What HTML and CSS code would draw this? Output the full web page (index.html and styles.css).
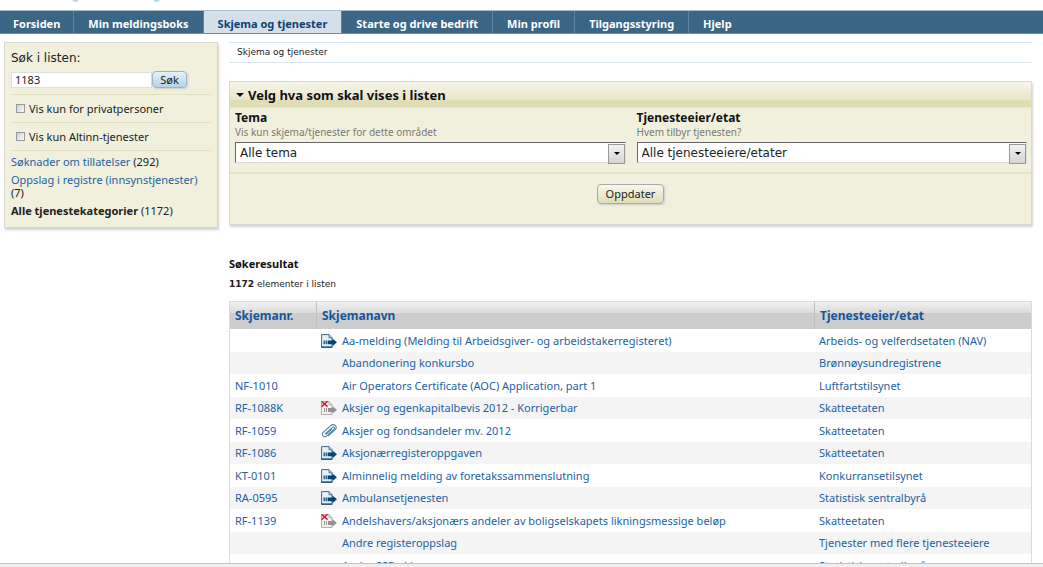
FILE: index.html
```html
<!DOCTYPE html>
<html lang="no">
<head>
<meta charset="utf-8">
<title>Skjema og tjenester</title>
<link rel="stylesheet" href="styles.css">
</head>
<body>
<svg class="sprite" aria-hidden="true">
  <symbol id="send" viewBox="0 0 16 14">
    <path d="M.6 .6H8L11 3.6V13.4H.6Z" fill="#e3f1f8" stroke="#34698c"/>
    <path d="M8 .6V3.8H11" fill="#9fc6da" stroke="#34698c" stroke-width=".8"/>
    <path d="M2.600 6.400h1.200v3.800h-1.200zM4.600 6.400h1.200v3.800h-1.200zM6.600 6.400H11.400V4.400L16 8.300L11.400 12.200V10.200H6.600z" fill="#064770"/>
    <path d="M.2 13H11.4" stroke="#174f75" stroke-width="1.2"/>
  </symbol>
  <symbol id="closed" viewBox="0 0 16 14">
    <path d="M.6 .6H8L11 3.6V13.4H.6Z" fill="#f6f4f3" stroke="#aaa7a8"/>
    <path d="M8 .6V3.8H11" fill="#ddd" stroke="#aaa7a8" stroke-width=".8"/>
    <path d="M3 7h1v4H3zM5 7h1v4H5zM7 7H11.4V5L16 8.9L11.4 12.600V11H7z" fill="#929194"/>
    <path d="M.5 .4L6.6 5.6M6.6 .2L.5 5.8" stroke="#d3173b" stroke-width="1.5"/>
  </symbol>
  <symbol id="clip" viewBox="0 0 16 14">
    <path d="M4.2 9.9L11.3 3.6C12.9 2.2 14.5 3.8 12.9 5.3L5.7 11.8C3.2 14 -.4 10.9 2.2 8.3L9.4 1.8C10.8.6 12.6.3 14 1.2C15.8 2.4 15.5 4.4 14.1 5.8L7.6 11.7M5.4 9.9L10.7 5.1" fill="none" stroke="#4d86a5" stroke-width="1.1" stroke-linecap="round"/>
  </symbol>
</svg>
<div class="page">
  <svg class="logo-edge" width="240" height="3" viewBox="0 0 240 3" aria-hidden="true"><path d="M73 0Q75.500 2 78 0M154 0Q156.500 2 159 0" fill="none" stroke="#a9cfe8" stroke-width="1.500"/></svg>
  <nav class="nav">
    <a href="#">Forsiden</a>
    <a href="#">Min meldingsboks</a>
    <a href="#" class="active">Skjema og tjenester</a>
    <a href="#">Starte og drive bedrift</a>
    <a href="#">Min profil</a>
    <a href="#">Tilgangsstyring</a>
    <a href="#">Hjelp</a>
  </nav>
  <div class="columns">
    <aside class="side box">
      <label class="side-title" for="q">Søk i listen:</label>
      <div class="search"><input type="text" id="q" value="1183"><button class="btn blue" type="button">Søk</button></div>
      <div class="check"><input type="checkbox" id="priv"><label for="priv">Vis kun for privatpersoner</label></div>
      <div class="check"><input type="checkbox" id="alt"><label for="alt">Vis kun Altinn-tjenester</label></div>
      <ul class="cats">
        <li><a href="#">Søknader om tillatelser</a> (292)</li>
        <li><a href="#">Oppslag i registre (innsynstjenester)</a> (7)</li>
        <li><b>Alle tjenestekategorier</b> (1172)</li>
      </ul>
    </aside>
    <main class="main">
      <div class="crumbs">Skjema og tjenester</div>
      <section class="filter box">
        <h2><span class="tri"></span>Velg hva som skal vises i listen</h2>
        <div class="fields">
          <div class="field">
            <label for="tema">Tema</label>
            <p>Vis kun skjema/tjenester for dette området</p>
            <div class="select"><select id="tema"><option>Alle tema</option></select></div>
          </div>
          <div class="field">
            <label for="etat">Tjenesteeier/etat</label>
            <p>Hvem tilbyr tjenesten?</p>
            <div class="select"><select id="etat"><option>Alle tjenesteeiere/etater</option></select></div>
          </div>
        </div>
        <div class="actions"><button class="btn" type="button">Oppdater</button></div>
      </section>
      <h3>Søkeresultat</h3>
      <p class="count"><b>1172</b> elementer i listen</p>
      <table>
        <colgroup><col class="c1"><col class="c2"><col class="c3"><col class="c4"></colgroup>
        <thead><tr><th><a href="#">Skjemanr.</a></th><th colspan="2"><a href="#">Skjemanavn</a></th><th><a href="#">Tjenesteeier/etat</a></th></tr></thead>
        <tbody>
          <tr><td></td><td><svg><use href="#send"/></svg></td><td><a href="#">Aa-melding (Melding til Arbeidsgiver- og arbeidstakerregisteret)</a></td><td><a href="#">Arbeids- og velferdsetaten (NAV)</a></td></tr>
          <tr><td></td><td></td><td><a href="#">Abandonering konkursbo</a></td><td><a href="#">Brønnøysundregistrene</a></td></tr>
          <tr><td><a href="#">NF-1010</a></td><td></td><td><a href="#">Air Operators Certificate (AOC) Application, part 1</a></td><td><a href="#">Luftfartstilsynet</a></td></tr>
          <tr><td><a href="#">RF-1088K</a></td><td><svg><use href="#closed"/></svg></td><td><a href="#">Aksjer og egenkapitalbevis 2012 - Korrigerbar</a></td><td><a href="#">Skatteetaten</a></td></tr>
          <tr><td><a href="#">RF-1059</a></td><td><svg><use href="#clip"/></svg></td><td><a href="#">Aksjer og fondsandeler mv. 2012</a></td><td><a href="#">Skatteetaten</a></td></tr>
          <tr><td><a href="#">RF-1086</a></td><td><svg><use href="#send"/></svg></td><td><a href="#">Aksjonærregisteroppgaven</a></td><td><a href="#">Skatteetaten</a></td></tr>
          <tr><td><a href="#">KT-0101</a></td><td><svg><use href="#send"/></svg></td><td><a href="#">Alminnelig melding av foretakssammenslutning</a></td><td><a href="#">Konkurransetilsynet</a></td></tr>
          <tr><td><a href="#">RA-0595</a></td><td><svg><use href="#send"/></svg></td><td><a href="#">Ambulansetjenesten</a></td><td><a href="#">Statistisk sentralbyrå</a></td></tr>
          <tr><td><a href="#">RF-1139</a></td><td><svg><use href="#closed"/></svg></td><td><a href="#">Andelshavers/aksjonærs andeler av boligselskapets likningsmessige beløp</a></td><td><a href="#">Skatteetaten</a></td></tr>
          <tr><td></td><td></td><td><a href="#">Andre registeroppslag</a></td><td><a href="#">Tjenester med flere tjenesteeiere</a></td></tr>
          <tr><td></td><td></td><td><a href="#">Andre SSB-skjema</a></td><td><a href="#">Statistisk sentralbyrå</a></td></tr>
        </tbody>
      </table>
    </main>
  </div>
</div>
<div class="statusbar"></div>
</body>
</html>
```
FILE: styles.css
```css
* { box-sizing: border-box; }
body {
  margin: 0;
  height: 100vh;
  display: flex;
  flex-direction: column;
  background: #fff;
  color: #222;
  font: 11px/14px "Noto Sans", sans-serif;
}
a { color: #2362a3; text-decoration: none; }
h2, h3, p, ul { margin: 0; padding: 0; }
.sprite { display: none; }
.page { flex: 1; min-height: 0; overflow: hidden; }
.statusbar { height: 4px; background: #f1eeef; border-top: 1px solid #c4c4c4; }
.logo-edge { display: block; margin-bottom: 7px; }

.nav {
  display: flex;
  height: 24px;
  background: #3b6686;
  border-top: 1px solid #a9bfcd;
  border-bottom: 1px solid #6d8ba5;
}
.nav a {
  padding: 0 14px;
  border-right: 1px solid #5f839d;
  color: #fff;
  font-weight: bold;
  line-height: 26px;
}
.nav a:first-child { padding: 0 13px; }
.nav a:last-child { border-right: 0; }
.nav .active { background: #d3e0e9; color: #103f74; }

.columns {
  display: grid;
  grid-template-columns: 214px minmax(0, 1fr);
  gap: 11px;
  align-items: start;
  padding: 8px 10px 0 4px;
}
.box {
  background: #f1f0dc;
  border: 1px solid #d9d9d2;
  box-shadow: 1px 2px 2px #d4d4d4;
}
.side { padding: 7px 6px 5px; }
.side-title {
  display: block;
  font: 12px/16px "DejaVu Sans", sans-serif;
  margin-bottom: 5px;
}
.search { display: flex; align-items: center; padding-bottom: 6px; }
.search input {
  width: 141px;
  height: 16px;
  border: 1px solid #dedede;
  padding: 0 3px;
  color: #222;
  font: 11px/14px "Noto Sans", sans-serif;
}
.btn {
  height: 20px;
  padding: 0 8px;
  border: 1px solid #aaa;
  border-radius: 4px;
  background: linear-gradient(#f8f7ed, #e0dcb8);
  box-shadow: 1px 1px 2px #ccc;
  color: #222;
  font: 11px/16px "Noto Sans", sans-serif;
}
.btn.blue {
  height: 17px;
  width: 35px;
  padding: 0;
  border-color: #9db4c2;
  background: linear-gradient(#e6f1f8, #b5d3e5);
  line-height: 14px;
}
.check {
  display: flex;
  align-items: center;
  gap: 4px;
  height: 28px;
  padding-left: 5px;
  border-top: 1px solid #e2dfc0;
}
.check input {
  appearance: none;
  width: 9px;
  height: 9px;
  margin: 0;
  border: 1px solid #999;
  background: linear-gradient(135deg, #ccd0d4, #f8f8f8);
}
.cats {
  list-style: none;
  border-top: 1px solid #e2dfc0;
  padding-top: 4px;
  line-height: 13px;
}
.cats li { margin-bottom: 5px; }

.crumbs {
  height: 21px;
  padding-left: 8px;
  border: solid #d9e5ee;
  border-width: 1px 0;
  font: 9px/19px "DejaVu Sans", sans-serif;
}
.main { padding-right: 1px; }
.filter { margin-top: 18px; }
.filter h2 {
  display: flex;
  align-items: center;
  gap: 4px;
  height: 26px;
  padding-left: 6px;
  background: linear-gradient(#f7f6ea, #e8e5c8 18px, #e0dcb6 18px);
  border-bottom: 1px solid #e9e6cc;
  color: #111;
  font-size: 13px;
}
.tri {
  border: solid transparent;
  border-width: 4px 4px 0;
  border-top-color: #111;
}
.fields {
  display: grid;
  grid-template-columns: 1fr 1fr;
  gap: 11px;
  padding: 3px 4px 9px 5px;
  border-bottom: 2px solid #e5e3c8;
}
.field label {
  display: block;
  color: #111;
  font-size: 12px;
  font-weight: bold;
  line-height: 14px;
}
.field p { color: #7b7b74; font-size: 10px; line-height: 14px; }
.select { position: relative; margin-top: 3px; }
.select::before {
  content: "";
  position: absolute;
  right: 1px;
  top: 2px;
  width: 15px;
  height: 18px;
  border: 1px solid #999;
  background: linear-gradient(#f2f2f2, #d4d4d4);
  pointer-events: none;
}
.select::after {
  content: "";
  position: absolute;
  right: 6px;
  top: 10px;
  border: solid transparent;
  border-width: 3px 3px 0;
  border-top-color: #000;
  pointer-events: none;
}
.select select {
  appearance: none;
  display: block;
  width: 100%;
  height: 21px;
  border: 1px solid #dcdcd8;
  border-top: 1px solid #666;
  border-left: 1px solid #666;
  border-radius: 0;
  background: #fff;
  padding: 0 4px;
  color: #222;
  font: 12px/18px "DejaVu Sans", sans-serif;
}
.actions { padding: 10px 0 20px; text-align: center; }
.actions .btn { display: block; margin: 0 auto; }

h3 { margin-top: 31px; color: #111; font-size: 11px; line-height: 16px; }
.count { margin-top: 5px; font: 9px/14px "DejaVu Sans", sans-serif; }

table {
  width: 100%;
  margin-top: 10px;
  border-collapse: separate;
  border-spacing: 0;
  table-layout: fixed;
  border: 1px solid #deddc6;
}
.c1 { width: 86px; }
.c2 { width: 21px; }
.c4 { width: 217px; }
th {
  height: 27px;
  padding: 0 5px;
  background: linear-gradient(#f1f1f1, #dadada 11px, #cdcdcd 11px);
  text-align: left;
  font-size: 12px;
}
th + th { border-left: 1px solid #c0c0c0; }
th a { color: #17569a; }
td { height: 22px; padding: 0 5px; white-space: nowrap; }
td:nth-child(2) { padding: 0 0 0 5px; }
tr:nth-child(odd) td { height: 23px; }
tbody tr:nth-child(even) { background: #f4f4f4; }
td svg { display: block; width: 16px; height: 14px; }
```
